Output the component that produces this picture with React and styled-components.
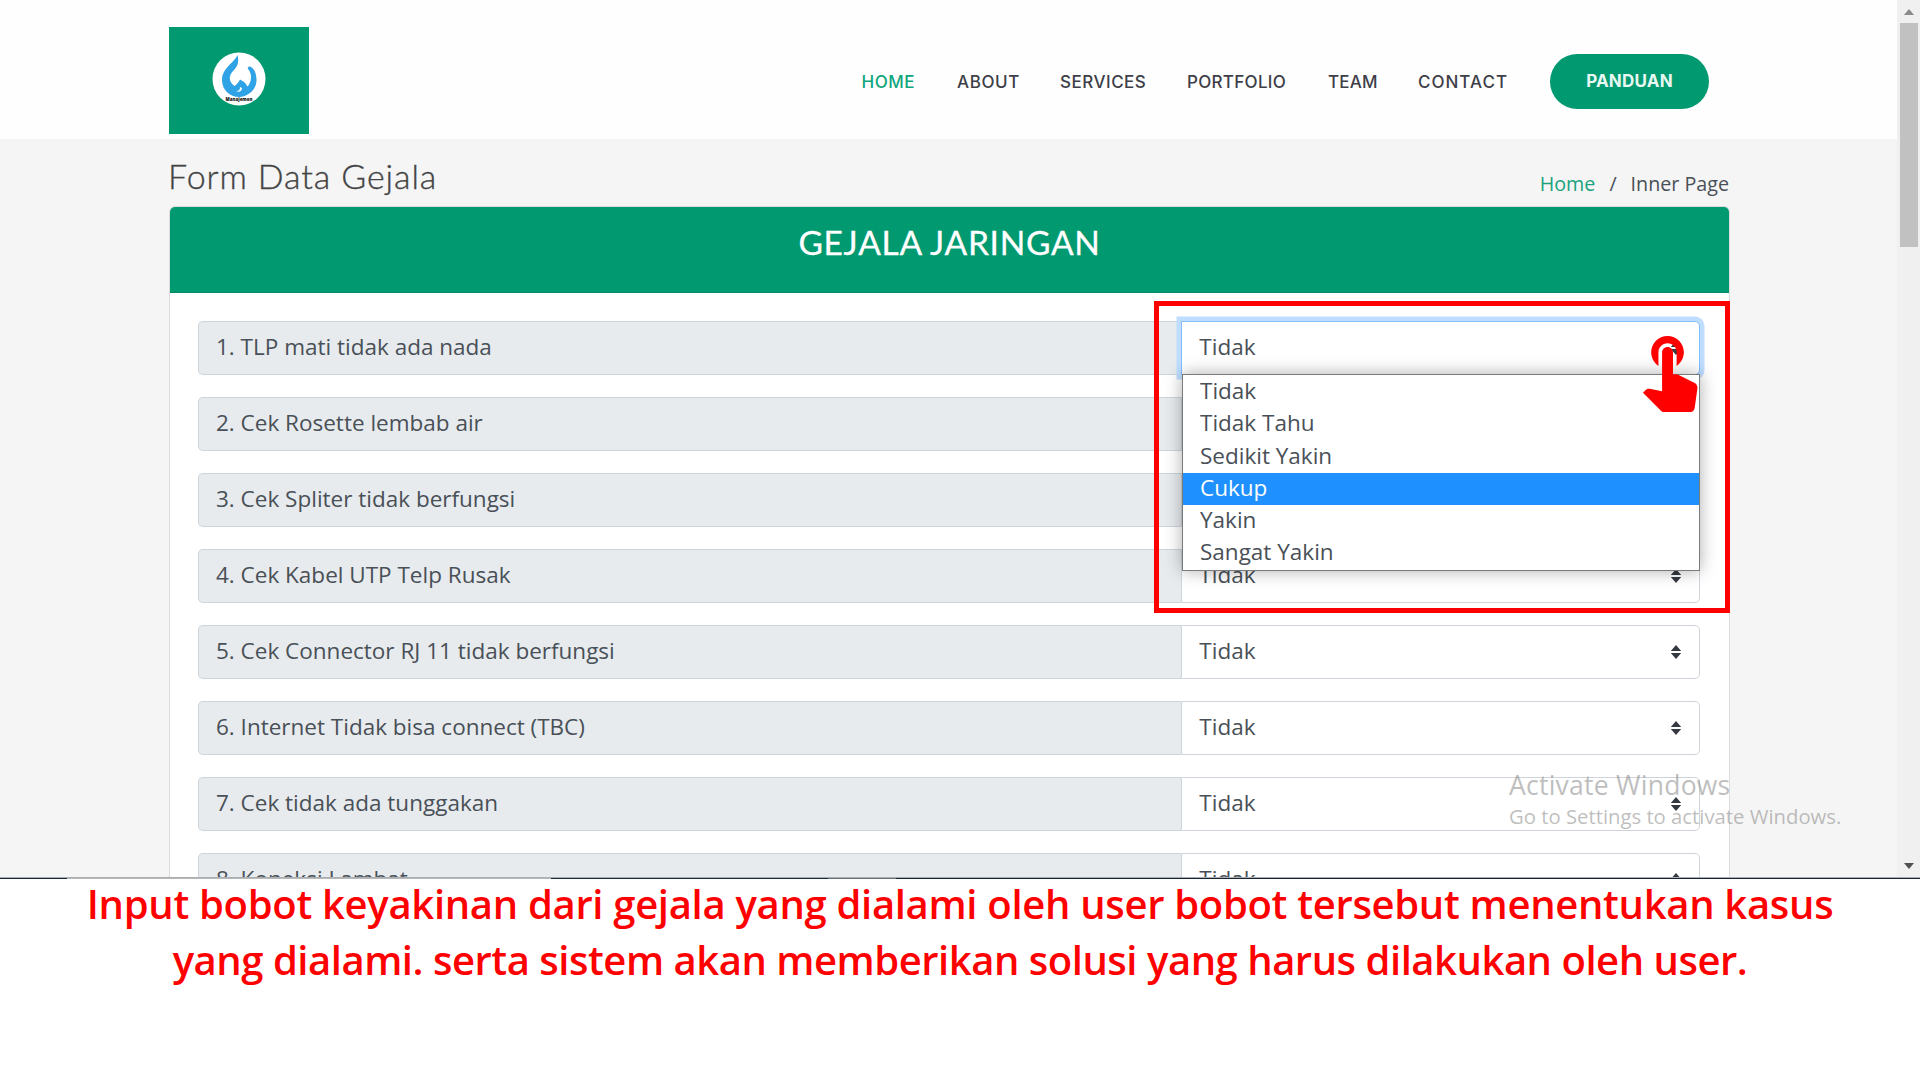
import React from "react";
import styled, { createGlobalStyle, css } from "styled-components";

const GREEN = "#009970";

const Global = createGlobalStyle`
  *, *::before, *::after { box-sizing: border-box; }
  body { margin: 0; background: #fff; font-family: "Open Sans", "Noto Sans", sans-serif; color: #495057; }
  ul { list-style: none; margin: 0; padding: 0; }
  h1, h2, p { margin: 0; }
`;

const Slide = styled.div`
  position: relative;
  width: 1920px;
  height: 1080px;
  overflow: hidden;
  display: flex;
  flex-direction: column;
  background: #fff;
`;

const Browser = styled.div`
  display: flex;
  height: 877px;
  overflow: hidden;
  flex: none;
`;

const Page = styled.div`
  width: 1897px;
  background: #f5f5f5;
  display: flex;
  flex-direction: column;
`;

const Header = styled.header`
  height: 139px;
  flex: none;
  background: #fefefe;
  display: flex;
  padding: 27px 188px 0 168.6px;
  justify-content: space-between;
`;

const Logo = styled.div`
  width: 140.6px;
  height: 107px;
  background: ${GREEN};
  display: flex;
  justify-content: center;
  padding-top: 25px;
`;

const Nav = styled.nav`
  display: flex;
  align-items: center;
  height: 108px;
  font-family: Inter, "Open Sans", sans-serif;
  white-space: nowrap;
`;

const NavLink = styled.span`
  width: ${(p) => p.$w}px;
  padding-top: 1px;
  font-size: 17px;
  letter-spacing: ${(p) => p.$ls}px;
  font-weight: 450;
  color: ${(p) => (p.$active ? "#0fa67d" : "#3d3e48")};
`;

const GuideButton = styled.span`
  width: 159px;
  height: 55px;
  border-radius: 28px;
  background: ${GREEN};
  color: #e9f7f2;
  display: flex;
  align-items: center;
  justify-content: center;
  font-size: 17px;
  font-weight: 700;
  letter-spacing: 0.2px;
`;

const TitleBar = styled.div`
  height: 67px;
  flex: none;
  padding: 0 168px 0 168px;
  display: flex;
  justify-content: space-between;
`;

const PageTitle = styled.h1`
  font-family: Lato, sans-serif;
  font-weight: 300;
  font-size: 34px;
  line-height: 40px;
  padding-top: 17px;
  letter-spacing: 0.9px;
  -webkit-text-stroke: 0.35px #444;
  color: #444;
`;

const Crumbs = styled.div`
  display: flex;
  gap: 14px;
  font-size: 19.7px;
  line-height: 30px;
  padding-top: 30px;
  a { color: #1aa37e; }
`;

const Card = styled.section`
  width: 1561px;
  margin-left: 169px;
  background: #fff;
  border: 1px solid #dcdcdc;
  border-radius: 6px;
  flex: none;
`;

const CardHeader = styled.div`
  height: 86px;
  background: ${GREEN};
  border-bottom: 1px solid #008a65;
  border-radius: 5px 5px 0 0;
  color: #fff;
  text-align: center;
  font-family: Lato, sans-serif;
  font-size: 33.5px;
  line-height: 40px;
  padding-top: 14.5px;
  letter-spacing: 0.7px;
  -webkit-text-stroke: 0.3px #fff;
`;

const CardBody = styled.div`
  padding: 27.5px 29px 28px 28px;
  display: flex;
  flex-direction: column;
  gap: 22px;
`;

const Row = styled.div`
  display: flex;
  height: 54px;
  font-size: 22.5px;
  line-height: 50px;
`;

const Label = styled.div`
  width: 984px;
  padding-left: 17px;
  background: #e7ebee;
  border: 1.4px solid #ced4da;
  border-right: 0;
  border-radius: 5px 0 0 5px;
`;

const Select = styled.div`
  width: 519px;
  padding: 0 17px 0 17px;
  display: flex;
  justify-content: space-between;
  background: #fff;
  border: 1.4px solid #ced4da;
  border-radius: 0 5px 5px 0;
  svg { align-self: center; }
  ${(p) => p.$focus && css`
    border-color: #80bdff;
    box-shadow: 0 0 0 4.5px #bfdeff;
  `}
`;

const Menu = styled.ul`
  position: absolute;
  left: 1182px;
  top: 374px;
  width: 518px;
  height: 197px;
  padding-top: 1px;
  background: #fff;
  border: 1px solid #7a7a7a;
  box-shadow: 0 0 16px rgba(0, 0, 0, 0.32);
`;

const Option = styled.li`
  height: 32.3px;
  line-height: 30px;
  padding-left: 17px;
  font-size: 22.5px;
  background: ${(p) => (p.$on ? "#1e90ff" : "transparent")};
  color: ${(p) => (p.$on ? "#fff" : "#495057")};
`;

const Frame = styled.div`
  position: absolute;
  left: 1154px;
  top: 301px;
  width: 576px;
  height: 312px;
  border: 5px solid #ff0000;
`;

const Pointer = styled.svg`
  position: absolute;
  left: 1643px;
  top: 336px;
`;

const Scrollbar = styled.div`
  width: 23px;
  background: #f0f0f0;
  display: flex;
  flex-direction: column;
  align-items: center;
  padding: 9px 0 8px;
  justify-content: space-between;
`;

const Thumb = styled.div`
  width: 18px;
  height: 224px;
  margin: 8px 0 auto;
  background: #c1c1c1;
`;

const Watermark = styled.div`
  position: absolute;
  left: 1509px;
  top: 768px;
  color: rgba(125, 125, 125, 0.5);
  white-space: nowrap;
`;

const WatermarkTitle = styled.p`
  font-size: 26.5px;
  line-height: 34px;
  letter-spacing: 0.25px;
`;

const WatermarkText = styled.p`
  font-size: 20.3px;
  line-height: 28px;
`;

const Taskbar = styled.div`
  height: 2px;
  flex: none;
  border-top: 1px solid #a9aeb2;
  background: linear-gradient(
    to right,
    #172736 67px,
    #b8b8b8 67px 551px,
    #172f3d 551px 828px,
    #6b7378 828px 896px,
    #172338 896px
  );
`;

const Caption = styled.p`
  color: #ff0000;
  text-align: center;
  font-weight: 600;
  font-size: 40px;
  line-height: 56px;
  margin-top: -3px;
  white-space: nowrap;
`;

const CaptionLine = styled.span`
  display: block;
  letter-spacing: ${(p) => p.$ls}px;
`;

const rows = [
  "1. TLP mati tidak ada nada",
  "2. Cek Rosette lembab air",
  "3. Cek Spliter tidak berfungsi",
  "4. Cek Kabel UTP Telp Rusak",
  "5. Cek Connector RJ 11 tidak berfungsi",
  "6. Internet Tidak bisa connect (TBC)",
  "7. Cek tidak ada tunggakan",
  "8. Koneksi Lambat",
];

const options = ["Tidak", "Tidak Tahu", "Sedikit Yakin", "Cukup", "Yakin", "Sangat Yakin"];

const links = [
  ["HOME", 95.5, 0.5],
  ["ABOUT", 103, 0.6],
  ["SERVICES", 127, 0.5],
  ["PORTFOLIO", 141, 0.3],
  ["TEAM", 90, 0.2],
  ["CONTACT", 132, 1],
];

const Carets = () => (
  <svg width="12" height="14" viewBox="0 0 12 14" fill="#343a40">
    <path d="M6 0l5.2 6H.8zM6 14L.8 8h10.4z" />
  </svg>
);

const Emblem = () => (
  <svg width="54" height="54" viewBox="0 0 54 54">
    <circle cx="27" cy="27" r="26.5" fill="#fff" />
    <path
      d="M25.500 3C22 11 10 16 10 28c0 10 8 17 17 17s17.500-7 17.500-17c0-6-2-12-6.500-13.500-2-.3-3 2-1.500 3 4 5 3 13-1 17-2-4-4-5-7.500-7-1.500 3-3 5-5.500 6.500-6-4-6-10-1.500-15C25 15 27.500 11 25.500 3z"
      fill="#2fa3e6"
    />
    <path d="M28 35c0 3-1 4-4 4 3 2 6 0 6-3z" fill="#fff" />
    <text x="27" y="49.300" textAnchor="middle" fontFamily="Open Sans" fontWeight="800" fontSize="4.400" fill="#111">
      Manajemen
    </text>
  </svg>
);

export default function App() {
  return (
    <>
      <Global />
      <Slide>
        <Browser>
          <Page>
            <Header>
              <Logo><Emblem /></Logo>
              <Nav>
                {links.map(([name, w, ls], i) => (
                  <NavLink key={name} $w={w} $ls={ls} $active={i === 0}>{name}</NavLink>
                ))}
                <GuideButton>PANDUAN</GuideButton>
              </Nav>
            </Header>
            <TitleBar>
              <PageTitle>Form Data Gejala</PageTitle>
              <Crumbs><a>Home</a><span>/</span><span>Inner Page</span></Crumbs>
            </TitleBar>
            <Card>
              <CardHeader>GEJALA JARINGAN</CardHeader>
              <CardBody>
                {rows.map((text, i) => (
                  <Row key={text}>
                    <Label>{text}</Label>
                    <Select $focus={i === 0}><span>Tidak</span><Carets /></Select>
                  </Row>
                ))}
              </CardBody>
            </Card>
          </Page>
          <Scrollbar>
            <svg width="10" height="6" viewBox="0 0 10 6"><path d="M0 6l5-6 5 6z" fill="#8a8a8a" /></svg>
            <Thumb />
            <svg width="10" height="6" viewBox="0 0 10 6"><path d="M0 0l5 6 5-6z" fill="#505050" /></svg>
          </Scrollbar>
        </Browser>
        <Taskbar />
        <Caption>
          <CaptionLine $ls={-0.31}>
            Input bobot keyakinan dari gejala yang dialami oleh user bobot tersebut menentukan kasus
          </CaptionLine>
          <CaptionLine $ls={-0.47}>
            yang dialami. serta sistem akan memberikan solusi yang harus dilakukan oleh user.
          </CaptionLine>
        </Caption>
        <Menu>
          {options.map((o) => <Option key={o} $on={o === "Cukup"}>{o}</Option>)}
        </Menu>
        <Frame />
        <Pointer width="54.5" height="76.3" viewBox="4.75 3 15 21" fill="#ff0000">
          <path d="M9 11.24V7.5C9 6.12 10.12 5 11.5 5S14 6.12 14 7.5v3.74c1.21-.81 2-2.18 2-3.74C16 5.01 13.99 3 11.5 3S7 5.01 7 7.5c0 1.56.79 2.93 2 3.74zm9.84 4.63l-4.54-2.26c-.17-.07-.35-.11-.54-.11H13v-6c0-.83-.67-1.5-1.5-1.5S10 6.67 10 7.5v10.74l-3.43-.72c-.08-.01-.15-.03-.24-.03-.31 0-.59.13-.79.33l-.79.8 4.94 4.94c.27.27.65.44 1.06.44h6.79c.75 0 1.33-.55 1.44-1.28l.75-5.27c.01-.07.02-.14.02-.2 0-.62-.38-1.16-.91-1.38z" />
        </Pointer>
        <Watermark>
          <WatermarkTitle>Activate Windows</WatermarkTitle>
          <WatermarkText>Go to Settings to activate Windows.</WatermarkText>
        </Watermark>
      </Slide>
    </>
  );
}
